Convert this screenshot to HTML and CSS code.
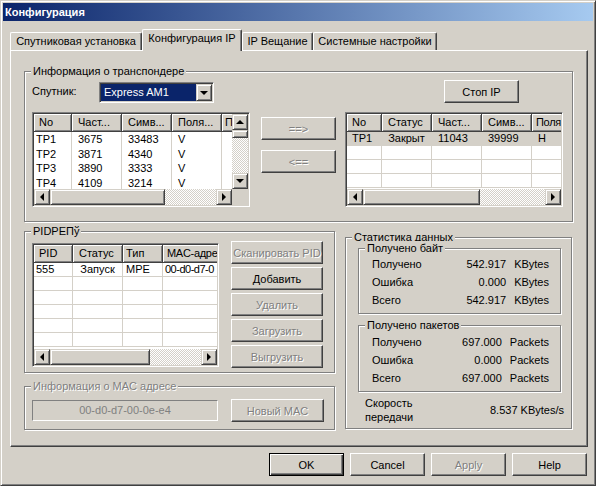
FILE: index.html
```html
<!DOCTYPE html>
<html lang="ru">
<head>
<meta charset="utf-8">
<title>Конфигурация</title>
<link rel="stylesheet" href="styles.css">
</head>
<body>
<div class="window">
  <div class="titlebar">Конфигурация</div>
  <div class="client">
    <div class="tabs">
      <div class="tab t1">Спутниковая установка</div>
      <div class="tab active t2">Конфигурация IP</div>
      <div class="tab t3">IP Вещание</div>
      <div class="tab t4">Системные настройки</div>
    </div>
    <div class="panel">
      <div class="group g-transp">
        <span class="legend">Информация о транспондере</span>
        <div class="row1">
          <span class="lbl-sat">Спутник:</span>
          <div class="combo">
            <span class="combo-val">Express AM1</span>
            <span class="combo-btn"><i class="tri-down"></i></span>
          </div>
          <button class="btn btn-stop">Стоп IP</button>
        </div>
        <div class="row2">
          <div class="list list-left">
            <div class="lv-main">
              <div class="lv-view">
                <div class="lv-head">
                  <div class="hc c38 first">No</div>
                  <div class="hc c50">Част...</div>
                  <div class="hc c50">Симв...</div>
                  <div class="hc c50">Поля...</div>
                  <div class="hc c50 narrowpad">П</div>
                </div>
                <div class="lv-row"><div class="c c38 first">TP1</div><div class="c c50">3675</div><div class="c c50">33483</div><div class="c c50">V</div><div class="c c50"></div></div>
                <div class="lv-row"><div class="c c38 first">TP2</div><div class="c c50">3871</div><div class="c c50">4340</div><div class="c c50">V</div><div class="c c50"></div></div>
                <div class="lv-row"><div class="c c38 first">TP3</div><div class="c c50">3890</div><div class="c c50">3333</div><div class="c c50">V</div><div class="c c50"></div></div>
                <div class="lv-row"><div class="c c38 first">TP4</div><div class="c c50">4109</div><div class="c c50">3214</div><div class="c c50">V</div><div class="c c50"></div></div>
              </div>
              <div class="vscroll">
                <div class="sb-btn"><i class="tri-up"></i></div>
                <div class="sb-thumb vthumb"></div>
                <div class="sb-track"></div>
                <div class="sb-btn"><i class="tri-down"></i></div>
              </div>
            </div>
            <div class="lv-bottom">
              <div class="hscroll">
                <div class="sb-btn"><i class="tri-left"></i></div>
                <div class="sb-thumb th115"></div>
                <div class="sb-track"></div>
                <div class="sb-btn"><i class="tri-right"></i></div>
              </div>
              <div class="sb-corner"></div>
            </div>
          </div>
          <div class="move-btns">
            <button class="btn dis w75">==&gt;</button>
            <button class="btn dis w75">&lt;==</button>
          </div>
          <div class="list list-right">
            <div class="lv-main">
              <div class="lv-view">
                <div class="lv-head">
                  <div class="hc c35 first">No</div>
                  <div class="hc c50">Статус</div>
                  <div class="hc c50">Част...</div>
                  <div class="hc c50">Симв...</div>
                  <div class="hc c50 tight">Поля</div>
                </div>
                <div class="lv-row hl sel"><div class="c c35 first5">TP1</div><div class="c c50 ctr">Закрыт</div><div class="c c50">11043</div><div class="c c50">39999</div><div class="c c50">H</div></div>
                <div class="lv-row hl"><div class="c c35"></div><div class="c c50"></div><div class="c c50"></div><div class="c c50"></div><div class="c c50"></div></div>
                <div class="lv-row hl"><div class="c c35"></div><div class="c c50"></div><div class="c c50"></div><div class="c c50"></div><div class="c c50"></div></div>
                <div class="lv-row hl"><div class="c c35"></div><div class="c c50"></div><div class="c c50"></div><div class="c c50"></div><div class="c c50"></div></div>
              </div>
            </div>
            <div class="lv-bottom">
              <div class="hscroll">
                <div class="sb-btn"><i class="tri-left"></i></div>
                <div class="sb-thumb th117"></div>
                <div class="sb-track"></div>
                <div class="sb-btn"><i class="tri-right"></i></div>
              </div>
            </div>
          </div>
        </div>
      </div>

      <div class="lower">
        <div class="lower-left">
          <div class="group g-pid">
            <span class="legend">PIDРЕПў</span>
            <div class="list list-pid">
              <div class="lv-main">
                <div class="lv-view">
                  <div class="lv-head">
                    <div class="hc c39 first">PID</div>
                    <div class="hc c50">Статус</div>
                    <div class="hc c40 narrowpad">Тип</div>
                    <div class="hc c60 tight">MAC-адре</div>
                  </div>
                  <div class="lv-row hl"><div class="c c39 first">555</div><div class="c c50 ctr">Запуск</div><div class="c c40 pad3">MPE</div><div class="c c60 pad3 squeeze">00-d0-d7-0</div></div>
                  <div class="lv-row hl"><div class="c c39"></div><div class="c c50"></div><div class="c c40"></div><div class="c c60"></div></div>
                  <div class="lv-row hl"><div class="c c39"></div><div class="c c50"></div><div class="c c40"></div><div class="c c60"></div></div>
                  <div class="lv-row hl"><div class="c c39"></div><div class="c c50"></div><div class="c c40"></div><div class="c c60"></div></div>
                  <div class="lv-row hl"><div class="c c39"></div><div class="c c50"></div><div class="c c40"></div><div class="c c60"></div></div>
                  <div class="lv-row hl"><div class="c c39"></div><div class="c c50"></div><div class="c c40"></div><div class="c c60"></div></div>
                </div>
              </div>
              <div class="lv-bottom">
                <div class="hscroll">
                  <div class="sb-btn"><i class="tri-left"></i></div>
                  <div class="sb-thumb th100"></div>
                  <div class="sb-track"></div>
                  <div class="sb-btn"><i class="tri-right"></i></div>
                </div>
              </div>
            </div>
            <div class="pid-btns">
              <button class="btn dis w92">Сканировать PID</button>
              <button class="btn w92">Добавить</button>
              <button class="btn dis w92">Удалить</button>
              <button class="btn dis w92">Загрузить</button>
              <button class="btn dis w92">Выгрузить</button>
            </div>
          </div>
          <div class="group g-mac">
            <span class="legend dis-text">Информация о MAC адресе</span>
            <div class="edit">00-d0-d7-00-0e-e4</div>
            <button class="btn dis w93 btn-mac">Новый MAC</button>
          </div>
        </div>

        <div class="group g-stats">
          <span class="legend">Статистика данных</span>
          <div class="group g-inner">
            <span class="legend">Получено байт</span>
            <div class="stat-grid">
              <span>Получено</span><span class="num">542.917</span><span>KBytes</span>
              <span>Ошибка</span><span class="num">0.000</span><span>KBytes</span>
              <span>Всего</span><span class="num">542.917</span><span>KBytes</span>
            </div>
          </div>
          <div class="group g-inner g-inner2">
            <span class="legend">Получено пакетов</span>
            <div class="stat-grid">
              <span>Получено</span><span class="num">697.000</span><span>Packets</span>
              <span>Ошибка</span><span class="num">0.000</span><span>Packets</span>
              <span>Всего</span><span class="num">697.000</span><span>Packets</span>
            </div>
          </div>
          <div class="speed">
            <div class="speed-lbl">Скорость<br>передачи</div>
            <div class="speed-val">8.537 KBytes/s</div>
          </div>
        </div>
      </div>
    </div>

    <div class="footer">
      <button class="btn def w75">OK</button>
      <button class="btn w75">Cancel</button>
      <button class="btn dis w75">Apply</button>
      <button class="btn w75">Help</button>
    </div>
  </div>
</div>
</body>
</html>
```

FILE: styles.css
```css
* { box-sizing: border-box; margin: 0; padding: 0; }
html, body { background: #d4d0c8; }
body {
  font-family: "Liberation Sans", Arial, sans-serif;
  font-size: 11px;
  color: #000;
  width: 596px;
  height: 486px;
  overflow: hidden;
}

.window {
  width: 596px;
  height: 486px;
  background: #d4d0c8;
  border: 1px solid;
  border-color: #d4d0c8 #404040 #404040 #d4d0c8;
  box-shadow: inset 1px 1px 0 #fff, inset -1px -1px 0 #808080;
  padding: 2px;
}

.titlebar {
  height: 18px;
  background: linear-gradient(to right, #0a246a, #a6caf0);
  color: #fff;
  font-weight: bold;
  font-size: 11px;
  line-height: 18px;
  padding-left: 2px;
}

.client { padding: 8px 5px 0 7px; }

/* tabs */
.tabs {
  display: flex;
  align-items: flex-end;
  height: 21px;
  position: relative;
  z-index: 2;
}
.tab {
  height: 18px;
  border: 1px solid #fff;
  border-bottom: none;
  border-right-color: #404040;
  box-shadow: inset -1px 0 0 #808080;
  border-radius: 2px 2px 0 0;
  text-align: center;
  line-height: 16px;
  white-space: nowrap;
  background: #d4d0c8;
}
.tab.active {
  height: 22px;
  margin-bottom: -1px;
  line-height: 17px;
}
.t1 { width: 132px; }
.t2 { width: 100px; }
.t3 { width: 71px; }
.t4 { width: 124px; }

.panel {
  width: 578px;
  height: 397px;
  border: 1px solid;
  border-color: #fff #404040 #404040 #fff;
  box-shadow: inset -1px -1px 0 #808080;
  padding: 20px 0 0 13px;
}

/* group boxes */
.group {
  position: relative;
  border: 1px solid #808080;
  box-shadow: inset 1px 1px 0 #fff, 1px 1px 0 #fff;
}
.legend {
  position: absolute;
  left: 6px;
  top: -8px;
  background: #d4d0c8;
  padding: 0 2px;
  line-height: 14px;
  white-space: nowrap;
}
.dis-text { color: #808080; text-shadow: 1px 1px 0 #fff; }

.g-transp {
  width: 549px;
  height: 151px;
  padding: 8px 0 0 7px;
}
.row1 { display: flex; height: 23px; align-items: flex-start; }
.lbl-sat { width: 67px; line-height: 23px; }

.combo {
  margin-top: 2px;
  width: 115px;
  height: 21px;
  display: flex;
  border: 1px solid;
  border-color: #808080 #fff #fff #808080;
  box-shadow: inset 1px 1px 0 #404040, inset -1px -1px 0 #d4d0c8;
  padding: 1px;
  background: #fff;
}
.combo-val {
  flex: 1;
  background: #0a246a;
  color: #fff;
  padding-left: 3px;
  line-height: 17px;
  white-space: nowrap;
}
.combo-btn {
  width: 16px;
  height: 17px;
  background: #d4d0c8;
  border: 1px solid;
  border-color: #d4d0c8 #404040 #404040 #d4d0c8;
  box-shadow: inset 1px 1px 0 #fff, inset -1px -1px 0 #808080;
  display: flex;
  align-items: center;
  justify-content: center;
}

.btn {
  font: inherit;
  font-size: 11px;
  background: #d4d0c8;
  color: #000;
  border: 1px solid;
  border-color: #fff #404040 #404040 #fff;
  box-shadow: inset -1px -1px 0 #808080, inset 1px 1px 0 #d4d0c8;
  height: 23px;
  padding: 0;
  display: flex;
  align-items: center;
  justify-content: center;
  white-space: nowrap;
  flex: none;
}
.btn.dis { color: #808080; text-shadow: 1px 1px 0 #fff; }
.btn.def {
  border-color: #000;
  box-shadow: inset 1px 1px 0 #fff, inset -1px -1px 0 #404040, inset -2px -2px 0 #808080;
}
.w75 { width: 75px; }
.w92 { width: 92px; }
.w93 { width: 93px; }
.btn-stop { width: 75px; margin-left: auto; margin-right: 53px; }

.row2 { display: flex; align-items: flex-start; margin-top: 9px; }
.move-btns { margin-left: 11px; padding-top: 5px; display: flex; flex-direction: column; gap: 10px; }

/* list views */
.list {
  border: 1px solid;
  border-color: #808080 #fff #fff #808080;
  box-shadow: inset 1px 1px 0 #404040, inset -1px -1px 0 #d4d0c8;
  padding: 1px;
  background: #fff;
  display: flex;
  flex-direction: column;
  flex: none;
}
.list-left { width: 218px; height: 95px; }
.list-right { width: 218px; height: 95px; margin-left: 9px; }
.list-pid { width: 187px; height: 124px; margin-top: 2px; }

.lv-main { flex: 1; display: flex; min-height: 0; }
.lv-view { flex: 1; min-width: 0; overflow: hidden; }
.lv-head, .lv-row { display: flex; white-space: nowrap; }
.hc {
  flex: none;
  height: 18px;
  line-height: 16px;
  padding-left: 6px;
  background: #d4d0c8;
  border-right: 1px solid #404040;
  border-bottom: 1px solid #404040;
  box-shadow: inset 1px 1px 0 #fff, inset -1px -1px 0 #808080;
  overflow: hidden;
}
.hc.first { padding-left: 5px; }
.hc.narrowpad { padding-left: 3px; }
.hc.tight { padding-left: 4px; letter-spacing: -0.3px; }
.lv-row { height: 14px; }
.list-left .lv-row { height: 14.5px; }
.lv-row.hl { border-bottom: 1px solid #d4d0c8; }
.lv-row.sel { background: #d4d0c8; }
.c {
  flex: none;
  height: 100%;
  line-height: 13px;
  padding-left: 6px;
  border-right: 1px solid #d4d0c8;
  overflow: hidden;
}
.list-left .c { line-height: 15px; }
.c.first { padding-left: 2px; }
.c.first5 { padding-left: 5px; }
.c.ctr { padding-left: 0; text-align: center; }
.c.pad3 { padding-left: 3px; }
.c.squeeze { padding-left: 2px; letter-spacing: -0.5px; }
.c35 { width: 35px; }
.c38 { width: 38px; }
.c39 { width: 39px; }
.c40 { width: 40px; }
.c50 { width: 50px; }
.c60 { width: 60px; }

/* scrollbars */
.vscroll { width: 16px; display: flex; flex-direction: column; flex: none; }
.lv-bottom { display: flex; height: 16px; flex: none; }
.hscroll { flex: 1; display: flex; }
.sb-corner { width: 16px; background: #d4d0c8; }
.sb-btn, .sb-thumb {
  flex: none;
  width: 16px;
  height: 16px;
  background: #d4d0c8;
  border: 1px solid;
  border-color: #d4d0c8 #404040 #404040 #d4d0c8;
  box-shadow: inset 1px 1px 0 #fff, inset -1px -1px 0 #808080;
  display: flex;
  align-items: center;
  justify-content: center;
}
.vthumb { height: 8px; }
.th115 { width: 115px; }
.th117 { width: 117px; }
.th100 { width: 100px; }
.sb-track {
  flex: 1;
  background-image: repeating-conic-gradient(#fff 0% 25%, #d4d0c8 0% 50%);
  background-size: 2px 2px;
}

.tri-up, .tri-down, .tri-left, .tri-right { display: block; width: 0; height: 0; }
.tri-up { border-left: 4px solid transparent; border-right: 4px solid transparent; border-bottom: 4px solid #000; }
.tri-down { border-left: 4px solid transparent; border-right: 4px solid transparent; border-top: 4px solid #000; }
.tri-left { border-top: 4px solid transparent; border-bottom: 4px solid transparent; border-right: 4px solid #000; }
.tri-right { border-top: 4px solid transparent; border-bottom: 4px solid transparent; border-left: 4px solid #000; }

/* lower part */
.lower { display: flex; align-items: flex-start; margin-top: 9px; }
.lower-left { width: 311px; display: flex; flex-direction: column; }
.g-pid {
  height: 142px;
  padding: 9px 0 0 7px;
  display: flex;
  align-items: flex-start;
}
.pid-btns { margin-left: 12px; display: flex; flex-direction: column; gap: 3px; }

.g-mac {
  margin-top: 13px;
  height: 44px;
  padding: 13px 0 0 7px;
  display: flex;
  align-items: flex-start;
}
.edit {
  width: 186px;
  height: 21px;
  border: 1px solid;
  border-color: #808080 #fff #fff #808080;
  color: #808080;
  text-align: center;
  line-height: 19px;
}
.btn-mac { margin-left: 13px; margin-top: -1px; }

.g-stats {
  margin-left: 10px;
  margin-top: 6px;
  width: 227px;
  height: 192px;
  padding: 10px 10px 0 12px;
}
.g-inner { height: 66px; padding: 6px 11px 0 13px; }
.g-inner2 { margin-top: 11px; height: 67px; padding-top: 7px; }
.stat-grid {
  display: grid;
  grid-template-columns: 1fr auto auto;
  column-gap: 8px;
  line-height: 18px;
}
.num { text-align: right; }
.speed {
  display: flex;
  align-items: center;
  justify-content: space-between;
  margin: 4px -3px 0 7px;
}
.speed-lbl { line-height: 14px; }

.footer {
  display: flex;
  justify-content: flex-end;
  gap: 6px;
  margin-top: 6px;
  padding-right: 1px;
}
```
